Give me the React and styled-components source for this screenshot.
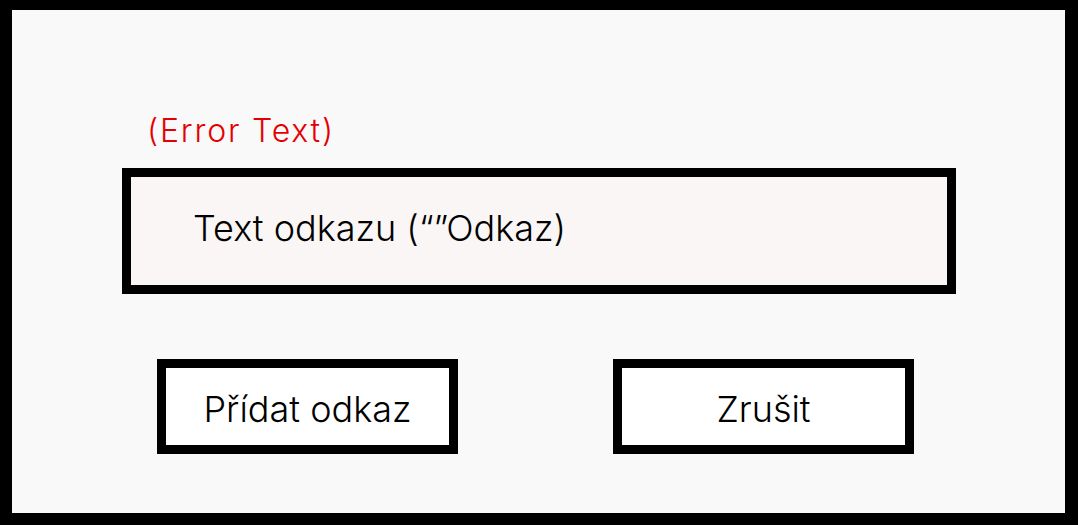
import React from "react";
import styled, { createGlobalStyle } from "styled-components";

const Global = createGlobalStyle`
  html, body { margin: 0; padding: 0; background: #000; }
  * { box-sizing: border-box; }
`;

const Frame = styled.div`
  width: 1078px;
  height: 525px;
  border-style: solid;
  border-color: #000;
  border-width: 10px 13px 12px 12px;
  background: #f9f9f9;
  padding: 102px 0 0 110px;
  display: flex;
  flex-direction: column;
  align-items: flex-start;
  font-family: Inter, "Noto Sans", sans-serif;
  font-weight: 320;
`;

const ErrorText = styled.div`
  margin-left: 25px;
  font-size: 32px;
  line-height: 38px;
  letter-spacing: 1.8px;
  color: #e50000;
`;

const LinkField = styled.div`
  margin-top: 18px;
  width: 834px;
  height: 126px;
  border: 9px solid #000;
  background: #f9f6f5;
  display: flex;
  align-items: center;
  padding: 0 0 6px 62px;
  font-size: 36px;
  color: #000;
`;

const ButtonRow = styled.div`
  display: flex;
  gap: 155px;
  margin-top: 65px;
  padding-left: 35px;
`;

const Button = styled.div`
  width: 301px;
  height: 95px;
  border: 9px solid #000;
  background: #fff;
  display: flex;
  align-items: center;
  justify-content: center;
  padding-top: 4px;
  font-size: 36px;
  color: #000;
`;

export default function App() {
  return (
    <>
      <Global />
      <Frame>
        <ErrorText>(Error Text)</ErrorText>
        <LinkField>Text odkazu (“”Odkaz)</LinkField>
        <ButtonRow>
          <Button>Přídat odkaz</Button>
          <Button>Zrušit</Button>
        </ButtonRow>
      </Frame>
    </>
  );
}
